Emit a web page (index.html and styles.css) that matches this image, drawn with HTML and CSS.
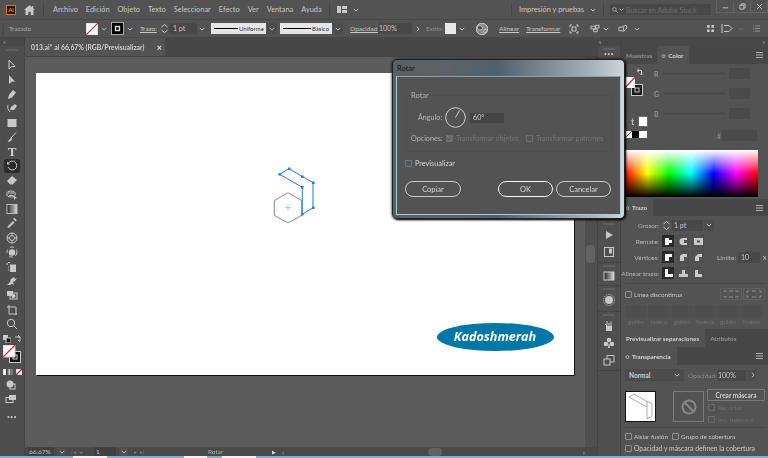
FILE: index.html
```html
<!DOCTYPE html>
<html lang="es">
<head>
<meta charset="utf-8">
<title>Adobe Illustrator</title>
<link rel="stylesheet" href="styles.css">
</head>
<body>
<div class="app">
  <header class="menubar">
    <span class="ai-logo">Ai</span>
    <svg class="home" viewBox="0 0 12 11"><path d="M6 0 0 5.500h1.600V11h3V7.500h2.800V11h3V5.500H12L10 3.700V1H8.600v1.400z"/></svg>
    <i class="vr vr-home"></i>
    <nav class="menus"><span>Archivo</span><span>Edición</span><span>Objeto</span><span>Texto</span><span>Seleccionar</span><span>Efecto</span><span>Ver</span><span>Ventana</span><span>Ayuda</span></nav>
    <i class="vr vr-menu"></i>
    <svg class="layout" viewBox="0 0 10 7"><path d="M0 0h4v7H0zM5 0h5v3H5zM5 4h5v3H5z"/></svg>
    <svg class="chev chev-layout" viewBox="0 0 8 5"><path d="M1 1l3 3 3-3"/></svg>
    <div class="grow"></div>
    <i class="vr"></i>
    <span class="workspace-name">Impresión y pruebas</span>
    <svg class="chev chev-ws" viewBox="0 0 8 5"><path d="M1 1l3 3 3-3"/></svg>
    <i class="vr vr-ws"></i>
    <div class="stock">
      <svg class="glass" viewBox="0 0 9 9"><circle cx="3.600" cy="3.600" r="2.700"/><path d="M5.600 5.600 8.500 8.500"/></svg>
      <svg class="chev chev-stock" viewBox="0 0 8 5"><path d="M1 1l3 3 3-3"/></svg>
      <span>Buscar en Adobe Stock</span>
    </div>
    <div class="winbtns">
      <span class="winbtn"><svg viewBox="0 0 8 8"><path d="M1 5.500h6"/></svg></span>
      <span class="winbtn"><svg viewBox="0 0 8 8"><path d="M2.500 2.500V1h4.500v4.500H5.500M1 2.500h4.500V7H1z"/></svg></span>
      <span class="winbtn"><svg viewBox="0 0 8 8"><path d="m1.200 1.200 5.600 5.600m0-5.600L1.200 6.800"/></svg></span>
    </div>
  </header>

  <div class="controlbar">
    <i class="grip"></i>
    <span class="cb-title">Trazado</span>
    <svg class="fill-none" viewBox="0 0 12 12"><rect width="12" height="12" fill="#fff"/><path d="M0 12 12 0" stroke="#e3202a" stroke-width="1.200"/></svg>
    <svg class="chev cb-c1" viewBox="0 0 8 5"><path d="M1 1l3 3 3-3"/></svg>
    <svg class="stroke-box" viewBox="0 0 13 13"><rect x=".5" y=".5" width="12" height="12" fill="#000" stroke="#aaa"/><rect x="4.500" y="4.500" width="4" height="4" fill="none" stroke="#ddd" stroke-width="1.400"/></svg>
    <svg class="chev cb-c2" viewBox="0 0 8 5"><path d="M1 1l3 3 3-3"/></svg>
    <span class="cb-link cb-trazo">Trazo:</span>
    <svg class="spin cb-spin" viewBox="0 0 9 11"><path d="M1.500 4 4.500 1.500 7.500 4M1.500 7l3 2.500L7.500 7"/></svg>
    <span class="cb-val">1 pt</span>
    <svg class="chev cb-c3" viewBox="0 0 8 5"><path d="M1 1l3 3 3-3"/></svg>
    <span class="cb-line cb-uni"><i class="bar"></i><b>Uniforme</b></span>
    <span class="chevbox"><svg class="chev" viewBox="0 0 8 5"><path d="M1 1l3 3 3-3"/></svg></span>
    <span class="cb-line cb-bas"><i class="bar"></i><b>Básico</b></span>
    <span class="chevbox"><svg class="chev" viewBox="0 0 8 5"><path d="M1 1l3 3 3-3"/></svg></span>
    <span class="cb-link cb-op">Opacidad:</span>
    <span class="cb-pct">100%</span>
    <svg class="chev-r cb-arrow" viewBox="0 0 5 8"><path d="m1 1 3 3-3 3"/></svg>
    <span class="cb-muted">Estilo:</span>
    <i class="style-swatch"></i>
    <svg class="chev cb-c6" viewBox="0 0 8 5"><path d="M1 1l3 3 3-3"/></svg>
    <svg class="globe" viewBox="0 0 12 12"><circle cx="6" cy="6" r="5.800" fill="#8b8b8b"/><path d="M2 3c2-1 3 0 4 1s0 3-2 3-3-1-2-4zM8 7l2-1 0 3-2 1z" fill="#444"/></svg>
    <span class="cb-link cb-al">Alinear</span>
    <span class="cb-link cb-tr">Transformar</span>
    <svg class="ci ci-1" viewBox="0 0 10 10"><path d="M3 1H1v2M7 1h2v2M3 9H1V7M7 9h2V7M3 3h4v4H3z"/></svg>
    <svg class="ci ci-2" viewBox="0 0 11 10"><path d="M1 2h5v3H1zM6 1h4v3H6zM4 5h4v3H4z"/></svg>
    <svg class="chev cb-c7" viewBox="0 0 8 5"><path d="M1 1l3 3 3-3"/></svg>
    <svg class="ci ci-3" viewBox="0 0 11 10"><path d="M1 3h5v4H1zM5 2l4-1 1 3-4 4"/></svg>
    <svg class="chev cb-c8" viewBox="0 0 8 5"><path d="M1 1l3 3 3-3"/></svg>
    <div class="grow"></div>
    <svg class="ci ci-grid" viewBox="0 0 8 8"><path class="solid" d="M0 0h3v3H0zM5 0h3v3H5zM0 5h3v3H0zM5 5h3v3H5z"/></svg>
    <svg class="ci ci-dist" viewBox="0 0 12 9"><path d="M1 0v9M3 1.500h5l3 3-3 3H3"/></svg>
    <svg class="chev cb-c9" viewBox="0 0 8 5"><path d="M1 1l3 3 3-3"/></svg>
    <svg class="ci ci-list" viewBox="0 0 8 8"><path d="M0 1h1M2 1h6M0 4h1M2 4h6M0 7h1M2 7h6"/></svg>
  </div>

  <div class="workspace">
    <aside class="toolbar">
      <div class="collapse-row"><span>»</span></div>
      <div class="tools">
        <i class="toolgrip"></i>
        <span class="tool"><svg viewBox="0 0 12 12"><path d="M3 1v9l2.500-2.300L9 7.500z"/></svg></span>
        <span class="tool"><svg viewBox="0 0 12 12"><path class="solid" d="M3 1v9l2.500-2.300L9 7.500z"/></svg></span>
        <span class="tool"><svg viewBox="0 0 12 12"><path class="solid" d="M2 11l1-4 4-5 3 2.500-4 5z"/></svg></span>
        <span class="tool"><svg viewBox="0 0 12 12"><path d="M2 3c-1 2 0 5 2 7"/><path class="solid" d="M4 8l1-3 4-3 2 2-3 4z"/></svg></span>
        <span class="tool"><svg viewBox="0 0 12 12"><rect class="solid" x="1.500" y="2" width="9" height="8"/></svg></span>
        <span class="tool"><svg viewBox="0 0 12 12"><path d="M10 1.500 5 7"/><path class="solid" d="M5 6.500 6.500 8 4 10.500l-2.500.5z"/></svg></span>
        <span class="tool tool-t">T</span>
        <span class="tool tool-on"><svg viewBox="0 0 12 12"><path d="M2.300 3.300A4.500 4.500 0 1 1 2 7"/><path class="solid" d="M1 1.500v3h3z"/></svg></span>
        <span class="tool"><svg viewBox="0 0 12 12"><path class="solid" d="M1 7l5-5 5 4-4.500 4.500H4z"/></svg></span>
        <span class="tool"><svg viewBox="0 0 12 12"><ellipse cx="5" cy="5" rx="4.200" ry="3"/><path d="M2 4h6M3 6.500h4"/><path class="solid" d="M7 6l4 3-2 .5-.5 2z"/></svg></span>
        <span class="tool"><svg viewBox="0 0 12 12"><defs><linearGradient id="gr"><stop offset="0" stop-color="#222"/><stop offset="1" stop-color="#ddd"/></linearGradient></defs><rect x="1" y="1.500" width="10" height="9" fill="url(#gr)" stroke="#bbb"/></svg></span>
        <span class="tool"><svg viewBox="0 0 12 12"><path class="solid" d="M7 4 8.500 5.500 3.500 10.500 1.500 11l.5-2zM7 1.800 8.300.8l2.500 2.500-1.200 1.300z"/></svg></span>
        <span class="tool"><svg viewBox="0 0 12 12"><circle cx="6" cy="6" r="5"/><circle cx="6" cy="6" r="2.500"/><path d="M6 1v2.500M6 8.500V11M1 6h2.500M8.500 6H11"/></svg></span>
        <span class="tool"><svg viewBox="0 0 12 12"><circle class="solid" cx="6" cy="6.500" r="3.200"/><circle cx="6" cy="6" r="5" stroke-dasharray="4 3"/></svg></span>
        <span class="tool"><svg viewBox="0 0 12 12"><path d="M2 1.500h2M1 4V2"/><rect class="solid" x="4" y="3.500" width="6" height="7.500"/><path d="M2 6h1M2 9h1"/></svg></span>
        <span class="tool"><svg viewBox="0 0 12 12"><path class="solid" d="M1 10l3-3 1-3 3-2 1 2 2-1-2 3-2 1 1 3-2-1-2 1z"/></svg></span>
        <span class="tool"><svg viewBox="0 0 12 12"><rect class="solid" x="1" y="2" width="6" height="5"/><rect x="4" y="4" width="7" height="6"/><circle class="solid" cx="7.500" cy="7" r="2"/></svg></span>
        <span class="tool"><svg viewBox="0 0 12 12"><path d="M1 3h9v8M3 1v9h8"/></svg></span>
        <span class="tool"><svg viewBox="0 0 12 12"><circle cx="5" cy="5" r="3.700"/><path d="m8 8 3 3"/></svg></span>
      </div>
      <div class="colors">
        <div class="swaprow">
          <svg class="mini" viewBox="0 0 8 8"><rect class="solid" width="5" height="5"/><rect x="3" y="3" width="5" height="5" fill="#111" stroke="#ccc"/></svg>
          <svg class="mini" viewBox="0 0 8 8"><path d="M1 2h5v4M4 0l2 2-2 0M6 7 4 5"/></svg>
        </div>
        <div class="fillstack">
          <svg viewBox="0 0 18 18"><rect x="6.500" y="6.500" width="11" height="11" fill="#111" stroke="#ccc"/><rect x="10" y="10" width="4" height="4" fill="none" stroke="#ccc"/><rect width="12" height="12" fill="#fff"/><path d="M0 12 12 0" stroke="#e3202a" stroke-width="1.200"/></svg>
        </div>
        <div class="moderow">
          <span class="grad3"><i></i><i></i><i></i></span>
          <svg class="none6" viewBox="0 0 6 6"><rect width="6" height="6" fill="#fff"/><path d="M0 6 6 0" stroke="#e3202a" stroke-width="1.300"/></svg>
        </div>
        <span class="tool tool-low"><svg viewBox="0 0 12 12"><circle class="solid" cx="5" cy="5" r="3.500"/><rect x="5" y="5" width="5" height="5"/></svg></span>
        <span class="tool tool-low2"><svg viewBox="0 0 12 12"><rect x="1" y="4.500" width="7" height="5"/><rect class="solid" x="4" y="2" width="7" height="5"/></svg></span>
        <span class="dots">•••</span>
      </div>
    </aside>

    <main class="document">
      <div class="tabbar">
        <div class="tab"><span>013.ai* al 66,67% (RGB/Previsualizar)</span><b>×</b></div>
      </div>
      <div class="canvasrow">
        <div class="canvas">
          <div class="artboard">
            <svg class="art" viewBox="36 73 538 302">
              <path class="hex" d="M288 192.700 301.700 200.700V215.300L288 223 274.300 215.300V200.700z"/>
              <path class="cross" d="M288 204.500v6.500M284.800 207.700h6.500"/>
              <path class="sel" d="M279.700 174.300 289 168.700 313 182.700V207.700L302.300 214.300V187.300L279.700 174.300"/>
              <g class="nodes">
                <rect x="278.500" y="173" width="2.500" height="2.500"/><rect x="288" y="167.500" width="2.500" height="2.500"/>
                <rect x="301" y="175.500" width="2.500" height="2.500"/><rect x="312" y="181.500" width="2.500" height="2.500"/>
                <rect x="312" y="206.500" width="2.500" height="2.500"/><rect x="301" y="213" width="2.500" height="2.500"/>
                <rect x="301" y="186" width="2.500" height="2.500"/>
              </g>
              <ellipse class="brand" cx="495.500" cy="337" rx="58.500" ry="14"/>
              <text class="brand-text" x="495" y="341">Kadoshmerah</text>
            </svg>
          </div>
        </div>
        <div class="vscroll"><i></i></div>
      </div>
      <div class="statusbar">
        <span class="st-zoom">66.67%</span>
        <span class="st-chev"><svg class="chev" viewBox="0 0 8 5"><path d="M1 1l3 3 3-3"/></svg></span>
        <span class="st-nav st-prev">|◂ &nbsp;◂</span>
        <span class="st-page">1</span>
        <span class="st-chev"><svg class="chev" viewBox="0 0 8 5"><path d="M1 1l3 3 3-3"/></svg></span>
        <span class="st-nav st-next">▸ &nbsp;▸|</span>
        <span class="st-tool">Rotar</span>
        <span class="st-play">▶</span>
        <div class="hscroll"><span>‹</span><i></i><span>›</span></div>
      </div>
    </main>

    <aside class="dock">
      <div class="collapse-row collapse-left"><span>«</span></div>
      <div class="dock-group dock-top"><i class="toolgrip"></i><span class="dots">•••</span></div>
      <div class="dock-spacer"></div>
      <div class="dock-group"><i class="toolgrip"></i>
        <span class="tool"><svg viewBox="0 0 12 12"><path class="solid" d="M3 2l7 4-7 4z"/></svg></span>
        <span class="tool"><svg viewBox="0 0 12 12"><rect x="1.500" y="1.500" width="9" height="9"/><path class="solid" d="M6 2.500h3v5H6z"/></svg></span>
      </div>
      <div class="dock-group dock-grad"><i class="toolgrip"></i>
        <span class="tool"><svg viewBox="0 0 12 12"><rect x="1" y="2" width="10" height="8" fill="url(#gr)" stroke="#ccc"/></svg></span>
      </div>
      <div class="dock-group dock-sun"><i class="toolgrip"></i>
        <span class="tool"><svg viewBox="0 0 12 12"><circle class="solid" cx="6" cy="6" r="4"/><circle cx="6" cy="6" r="5.500" stroke-dasharray="1 1"/></svg></span>
      </div>
      <div class="dock-group"><i class="toolgrip"></i>
        <span class="tool"><svg viewBox="0 0 12 12"><path class="solid" d="M3 6h6v5H3z"/><path d="M4 6V1M6 6V3M8 6V1.500M2 4l2 2"/></svg></span>
        <span class="tool"><svg viewBox="0 0 12 12"><circle class="solid" cx="6" cy="3" r="2.300"/><circle class="solid" cx="3" cy="7" r="2.300"/><circle class="solid" cx="9" cy="7" r="2.300"/><path class="solid" d="M5.500 7h1l.5 4H5z"/></svg></span>
        <span class="tool"><svg viewBox="0 0 12 12"><rect x="1" y="5" width="6" height="6"/><path d="M4 5V1.500h7V8H7"/></svg></span>
      </div>
    </aside>

    <section class="panels">
      <div class="collapse-row collapse-right"><span>»</span></div>
      <div class="ptabs">
        <span class="ptab">Muestras</span>
        <span class="ptab ptab-on"><em>≎</em> Color</span>
        <svg class="pmenu" viewBox="0 0 7 6"><path d="M0 .5h7M0 3h7M0 5.500h7"/></svg>
      </div>
      <div class="color">
        <div class="color-main">
          <div class="color-left">
            <div class="swap-mini"><svg viewBox="0 0 22 28"><path d="M12 2.500h4.500V7M14 .8l-2 1.700 2 1.700M15 5.500l1.500 1.500 1.500-1.500"/><rect x="6.500" y="16.500" width="11" height="11" fill="#1a1a1a" stroke="#c4c4c4"/><rect x="10" y="20" width="4" height="4" stroke="#c4c4c4"/><rect y="9" width="10" height="11" fill="#fff" stroke="none"/><path d="M0 20 10 9" stroke="#e3202a" stroke-width="1.200"/></svg></div>
            <div class="t-row"><b>t</b><i class="white-sq"></i></div>
            <div class="mini-row"><svg class="m-none" viewBox="0 0 7 7"><rect width="7" height="7" fill="#fff" stroke="none"/><path d="M0 7 7 0" stroke="#e3202a"/></svg><i class="m-black"></i><i class="m-white"></i></div>
          </div>
          <div class="sliders">
            <div class="sl"><label>R</label><i class="track"></i><i class="sl-box"></i></div>
            <div class="sl"><label>G</label><i class="track"></i><i class="sl-box"></i></div>
            <div class="sl"><label>B</label><i class="track"></i><i class="sl-box"></i></div>
            <div class="hex-row"><label>#</label><i class="hex-box"></i></div>
          </div>
        </div>
        <div class="spectrum"></div>
      </div>

      <div class="ptabs ptabs-stroke">
        <span class="ptab ptab-on"><em>≎</em> Trazo</span>
        <svg class="pmenu" viewBox="0 0 7 6"><path d="M0 .5h7M0 3h7M0 5.500h7"/></svg>
      </div>
      <div class="stroke">
        <div class="srow">
          <label>Grosor:</label>
          <svg class="spin" viewBox="0 0 9 11"><path d="M1.500 4 4.500 1.500 7.500 4M1.500 7l3 2.500L7.500 7"/></svg>
          <span class="s-val">1 pt</span>
          <span class="chevbox s-chev"><svg class="chev" viewBox="0 0 8 5"><path d="M1 1l3 3 3-3"/></svg></span>
        </div>
        <div class="srow">
          <label>Remate:</label>
          <span class="sbtn sbtn-on"><svg viewBox="0 0 9 9"><path class="wh" d="M1 1h4v2h3v3H5v2H1z"/></svg></span>
          <span class="sbtn"><svg viewBox="0 0 9 9"><path class="lt" d="M8 1H4a3.500 3.500 0 0 0 0 7h4V6H5V3h3z"/></svg></span>
          <span class="sbtn"><svg viewBox="0 0 9 9"><path class="lt" d="M0 1h9v7H0zM3 3.500v2h3v-2z" fill-rule="evenodd"/></svg></span>
        </div>
        <div class="srow">
          <label>Vértices:</label>
          <span class="sbtn sbtn-on"><svg viewBox="0 0 9 9"><path class="wh" d="M1 1h7v3H5v4H1z"/></svg></span>
          <span class="sbtn"><svg viewBox="0 0 9 9"><path class="lt" d="M3 1h5v3H5v4H1V3z"/></svg></span>
          <span class="sbtn"><svg viewBox="0 0 9 9"><path class="lt" d="M4 1h4v3H5v4H1V4z"/></svg></span>
          <label class="lim">Límite:</label>
          <span class="lim-box">10</span>
          <span class="lim-x">x</span>
        </div>
        <div class="srow">
          <label>Alinear trazo:</label>
          <span class="sbtn sbtn-on"><svg viewBox="0 0 9 9"><path class="wh" d="M1 0h3v5h5v3H1z"/></svg></span>
          <span class="sbtn"><svg viewBox="0 0 9 9"><path class="lt" d="M3 1h3v4h3v3H0V5h3z"/></svg></span>
          <span class="sbtn"><svg viewBox="0 0 9 9"><path class="lt" d="M1 1h3v4h4v3H1z"/></svg></span>
        </div>
        <hr class="sep sep-stroke">
        <div class="dash-row">
          <i class="cb"></i><span class="lbl">Línea discontinua</span>
          <div class="dash-btns">
            <span><svg viewBox="0 0 16 8"><path d="M1 2V1h3M6 1h4M12 1h3v1M1 6v1h3M6 7h4M12 7h3V6"/></svg></span>
            <span><svg viewBox="0 0 16 8"><path d="M1 3V1h2M13 1h2v2M1 5v2h2M13 7h2V5M6 1h4M6 7h4"/></svg></span>
          </div>
        </div>
        <div class="dash-grid">
          <span><i></i>guión</span><span><i></i>hueco</span><span><i></i>guión</span><span><i></i>hueco</span><span><i></i>guión</span><span><i></i>hueco</span>
        </div>
      </div>

      <div class="ptabs ptabs-sep">
        <span class="ptab ptab-wide">Previsualizar separaciones</span>
        <span class="ptab">Atributos</span>
      </div>
      <div class="ptabs ptabs-trans">
        <span class="ptab ptab-on"><em>≎</em> Transparencia</span>
        <svg class="pmenu" viewBox="0 0 7 6"><path d="M0 .5h7M0 3h7M0 5.500h7"/></svg>
      </div>
      <div class="trans">
        <div class="trow">
          <span class="blend">Normal<svg class="chev" viewBox="0 0 8 5"><path d="M1 1l3 3 3-3"/></svg></span>
          <span class="t-op">Opacidad:</span>
          <span class="t-pct">100%</span>
          <span class="t-more"><svg class="chev-r" viewBox="0 0 5 8"><path d="m1 1 3 3-3 3"/></svg></span>
        </div>
        <div class="tmask">
          <div class="thumb"><svg viewBox="0 0 28 28"><path d="M3 5 8 2l13 7.500 5 2V24l-5 3V9.500M3 5l18 10" fill="none" stroke="#999" stroke-width=".8"/></svg></div>
          <div class="nomask"><svg viewBox="0 0 16 16"><circle cx="8" cy="8" r="6.500"/><path d="M3.500 3.500l9 9"/></svg></div>
          <div class="mask-opts">
            <button class="maskbtn">Crear máscara</button>
            <div class="opt"><i class="cb cb-dim"></i>Recortar</div>
            <div class="opt"><i class="cb cb-dim"></i>Inv. máscara</div>
          </div>
        </div>
        <hr class="sep">
        <div class="checks"><i class="cb"></i><span class="lbl lbl-a">Aislar fusión</span><i class="cb"></i><span class="lbl">Grupo de cobertura</span></div>
        <div class="checks"><i class="cb"></i><span class="lbl lbl-long">Opacidad y máscara definen la cobertura</span></div>
      </div>
    </section>
  </div>
  <footer class="taskbar"><i></i><i></i><i></i></footer>

  <div class="dialog">
    <div class="dlg-title">Rotar</div>
    <div class="dlg-body">
      <fieldset class="dlg-set">
        <legend>Rotar</legend>
        <div class="dlg-angle">
          <label>Ángulo:</label>
          <svg class="dial" viewBox="0 0 21 21"><circle cx="10.500" cy="10.500" r="9.800"/><path d="M10.500 10.500 14.500 3.500"/></svg>
          <span class="dlg-input">60°</span>
        </div>
        <div class="dlg-opts">
          <label>Opciones:</label>
          <i class="dlg-cb dlg-cb-on"><svg viewBox="0 0 7 7"><path d="m1 3.500 2 2 3-4"/></svg></i><span>Transformar objetos</span>
          <i class="dlg-cb dlg-cb-2"></i><span>Transformar patrones</span>
        </div>
      </fieldset>
      <div class="dlg-prev"><i class="dlg-cb-blue"></i><span>Previsualizar</span></div>
      <div class="dlg-btns">
        <button class="dbtn dbtn-copy">Copiar</button>
        <button class="dbtn dbtn-ok">OK</button>
        <button class="dbtn">Cancelar</button>
      </div>
    </div>
  </div>
</div>
</body>
</html>
```

FILE: styles.css
```css
* { box-sizing: border-box; }
html, body { margin: 0; padding: 0; }
body { width: 768px; height: 458px; overflow: hidden; background: #535353; font-family: "Lato", "Open Sans", sans-serif; font-size: 7px; color: #c4c4c4; }
span, label { white-space: nowrap; }
i, em { font-style: normal; display: block; }
svg { display: block; fill: none; stroke: #c8c8c8; stroke-width: 1; }
svg .solid { fill: #c8c8c8; stroke: none; }
.app { position: relative; width: 768px; height: 458px; display: flex; flex-direction: column; filter: blur(.3px); }
.grow { flex: 1; }
.chev { width: 6px; height: 4px; flex: none; stroke-width: 1.200; }
.chev-r { width: 4px; height: 6px; flex: none; stroke-width: 1.200; }
.vr { display: block; width: 1px; height: 13px; background: #444; flex: none; }

/* menu bar */
.menubar { height: 19px; display: flex; align-items: center; background: #535353; padding-left: 6px; flex: none; }
.ai-logo { width: 10px; height: 10px; background: #2e1600; border: 1px solid #d9791f; color: #e88a2a; font-size: 6px; font-weight: 700; line-height: 8px; text-align: center; flex: none; }
.home { width: 11px; height: 10px; margin-left: 8px; flex: none; }
.home path { fill: #c8c8c8; stroke: none; }
.vr-home { margin-left: 8px; }
.menus { display: flex; gap: 8px; margin-left: 9px; font-size: 7.400px; color: #c6c6c6; }
.vr-menu { margin-left: 7px; }
.layout { width: 10px; height: 7px; margin-left: 7px; }
.layout path { fill: #c8c8c8; stroke: none; }
.chev-layout { margin-left: 6px; }
.workspace-name { margin-left: 7px; font-size: 7.400px; color: #c6c6c6; }
.chev-ws { margin-left: 6px; }
.vr-ws { margin-left: 7px; }
.stock { width: 101px; height: 11px; margin-left: 6px; background: #484848; display: flex; align-items: center; padding-left: 2px; color: #6e6e6e; font-size: 7px; border-radius: 1px; flex: none; }
.stock span { margin-left: 2px; }
.glass { width: 6px; height: 6px; }
.chev-stock { width: 5px; height: 3px; margin-left: 1px; }
.winbtns { display: flex; margin-left: 5px; height: 12px; align-self: flex-start; margin-top: 1px; border: 1px solid #626262; border-right: 0; border-top: 0; flex: none; }
.winbtn { width: 17px; display: flex; align-items: center; justify-content: center; border-right: 1px solid #626262; }
.winbtn svg { width: 7px; height: 7px; }

/* control bar */
.controlbar { height: 19px; flex: none; display: flex; align-items: center; background: #535353; border-top: 1px solid #484848; border-bottom: 1px solid #484848; padding-left: 2px; }
.grip { width: 2px; height: 12px; background: #4a4a4a; flex: none; }
.cb-title { margin-left: 5px; width: 77px; flex: none; font-size: 6.500px; color: #a8a8a8; }
.fill-none { width: 12px; height: 12px; flex: none; }
.cb-c1 { margin-left: 3px; }
.stroke-box { width: 13px; height: 13px; margin-left: 4px; flex: none; }
.cb-c2 { margin-left: 3px; }
.cb-link { text-decoration: underline; font-size: 6.500px; color: #c8c8c8; flex: none; }
.cb-trazo { margin-left: 7px; width: 16px; }
.spin { width: 9px; height: 11px; flex: none; }
.cb-spin { margin-left: 4px; }
.cb-val { width: 28px; height: 11px; background: #484848; padding-left: 4px; line-height: 11px; flex: none; }
.cb-c3 { margin-left: 2px; margin-right: 3px; }
.cb-line { height: 11px; background: #e6e6e6; display: flex; align-items: center; padding-left: 3px; flex: none; color: #333; font-size: 6px; margin-left: 3px; }
.cb-line b { font-weight: 400; margin-left: 1px; }
.cb-uni { width: 55px; }
.cb-bas { width: 52px; margin-left: 3px; }
.cb-uni .bar { width: 24px; height: 1.500px; background: #000; }
.cb-bas .bar { width: 28px; height: 1.500px; background: #000; }
.chevbox { width: 10px; height: 11px; background: #4c4c4c; display: flex; align-items: center; justify-content: center; margin-left: 1px; flex: none; }
.cb-op { margin-left: 7px; width: 28px; }
.cb-pct { width: 34px; height: 11px; background: #484848; line-height: 11px; padding-left: 1px; flex: none; }
.cb-arrow { margin-left: 4px; }
.cb-muted { margin-left: 6px; width: 19px; font-size: 6.500px; color: #8d8d8d; flex: none; }
.style-swatch { width: 11px; height: 11px; background: #e9e9e9; flex: none; }
.cb-c6 { margin-left: 3px; }
.globe { width: 12px; height: 12px; margin-left: 11px; flex: none; }
.cb-al { margin-left: 11px; width: 20px; }
.cb-tr { margin-left: 7px; width: 34px; }
.ci { width: 10px; height: 10px; flex: none; }
.ci-1 { margin-left: 9px; }
.ci-2 { margin-left: 11px; }
.cb-c7 { margin-left: 3px; }
.ci-3 { margin-left: 9px; }
.cb-c8 { margin-left: 6px; }
.ci-grid { width: 7px; height: 7px; }
.ci-dist { margin-left: 7px; width: 12px; height: 9px; }
.cb-c9 { margin-left: 5px; stroke: #6e6e6e; }
.ci-list { width: 7px; height: 7px; margin-left: 9px; margin-right: 8px; stroke: #999; }

/* workspace */
.workspace { flex: 1; min-height: 0; display: flex; }
.collapse-row { height: 8px; font-size: 6px; line-height: 7px; color: #b0b0b0; padding-left: 3px; background: #484848; flex: none; }
.toolbar { width: 25px; flex: none; display: flex; flex-direction: column; background: #4e4e4e; border-right: 1px solid #434343; }
.tools { display: flex; flex-direction: column; align-items: center; }
.toolgrip { width: 12px; height: 2px; background: #5f5f5f; margin: 2px auto 1px; flex: none; }
.tools .toolgrip { margin: 3px auto 7px; }
.tool { width: 16px; height: 14.400px; display: flex; align-items: center; justify-content: center; flex: none; }
.tool svg { width: 12px; height: 12px; }
.tool-t { font-family: "Liberation Serif", serif; font-size: 13px; font-weight: 700; color: #d0d0d0; line-height: 14px; }
.tool-on { background: #2b2b2b; border-radius: 2px; }
.colors { display: flex; flex-direction: column; padding-left: 3px; padding-top: 1px; }
.swaprow { display: flex; justify-content: space-between; width: 19px; padding-top: 3px; }
.mini { width: 8px; height: 8px; }
.fillstack { width: 18px; height: 18px; margin-top: 2px; }
.fillstack svg { width: 18px; height: 18px; }
.moderow { display: flex; margin-top: 6px; gap: 3px; }
.grad3 { display: flex; width: 10px; height: 6px; }
.grad3 i { flex: 1; background: #eee; }
.grad3 i:nth-child(2) { background: linear-gradient(90deg, #222, #ddd); }
.grad3 i:nth-child(3) { background: #777; }
.none6 { width: 6px; height: 6px; }
.tool-low { margin-top: 2px; }
.dots { text-align: center; font-size: 5px; letter-spacing: .5px; color: #c8c8c8; line-height: 6px; }
.colors .dots { width: 18px; margin-top: 8px; }

/* document */
.document { width: 572px; flex: none; display: flex; flex-direction: column; }
.tabbar { height: 18px; flex: none; background: #474747; }
.tab { width: 140px; height: 18px; background: #535353; display: flex; align-items: center; padding: 0 3px 0 6px; justify-content: space-between; color: #cfcfcf; font-size: 6.800px; font-weight: 700; }
.tab b { font-size: 9px; color: #ddd; }
.canvasrow { flex: 1; min-height: 0; display: flex; border-top: 1px solid #424242; }
.canvas { flex: 1; background: #5c5c5c; padding: 16px 0 0 11px; }
.artboard { width: 538px; height: 302px; background: #fff; box-shadow: 1px 1px 0 #111; }
.art { width: 538px; height: 302px; }
.hex { stroke: #8a8a8a; stroke-width: 1; fill: #fff; }
.cross { stroke: #4fe0e6; stroke-width: .8; }
.sel { stroke: #2f73d8; stroke-width: 1; }
.nodes rect { fill: #1f78ff; stroke: none; }
.brand { fill: #0077a6; stroke: none; }
.brand-text { fill: #fff; stroke: none; font-family: "Open Sans", sans-serif; font-weight: 700; font-style: italic; font-size: 12.600px; text-anchor: middle; }
.vscroll { width: 12px; background: #4f4f4f; flex: none; padding-top: 188px; }
.vscroll i { width: 9px; height: 18px; background: #636363; border-radius: 4px; margin-left: 1px; }
.statusbar { height: 9px; flex: none; display: flex; align-items: center; background: #494949; font-size: 6.500px; color: #c0c0c0; padding-left: 3px; }
.st-zoom { width: 26px; height: 9px; background: #404040; line-height: 9px; padding-left: 1px; flex: none; }
.st-chev { width: 9px; height: 9px; margin-left: 3px; display: flex; align-items: center; justify-content: center; background: #4f4f4f; flex: none; }
.st-nav { color: #747474; flex: none; font-size: 6px; width: 23px; }
.st-prev { margin-left: 5px; }
.st-next { margin-left: 6px; }
.st-page { width: 22px; height: 9px; background: #404040; line-height: 9px; padding-left: 2px; flex: none; }
.st-tool { margin-left: 51px; width: 64px; color: #b0b0b0; flex: none; }
.st-play { width: 9px; font-size: 5px; color: #ddd; flex: none; }
.hscroll { flex: 1; display: flex; align-items: center; padding: 0 12px 0 1px; color: #aaa; font-size: 8px; line-height: 8px; }
.hscroll i { width: 14px; height: 8px; background: #636363; border-radius: 4px; margin: 0 auto 0 144px; }

/* dock */
.dock { width: 23px; flex: none; background: #4f4f4f; display: flex; flex-direction: column; align-items: stretch; border-left: 1px solid #444; }
.collapse-left { padding-left: 1px; }
.dock-group { display: flex; flex-direction: column; align-items: center; border-bottom: 1px solid #444; flex: none; padding-bottom: 2px; }
.dock-group .tool { height: 17px; }
.dock-group.dock-grad .tool { height: 15px; }
.dock-group.dock-sun .tool { height: 18px; }
.dock-top { height: 19px; }
.dock-spacer { height: 156px; flex: none; }

/* panels */
.panels { width: 148px; flex: none; background: #535353; display: flex; flex-direction: column; border-left: 1px solid #444; }
.collapse-right { text-align: right; padding-right: 3px; }
.ptabs { height: 18px; flex: none; display: flex; align-items: stretch; background: #474747; }
.ptab { display: flex; align-items: center; padding: 0 5px; font-size: 6.300px; color: #8f8f8f; font-weight: 700; }
.ptab em { font-size: 6px; margin-right: 2px; font-weight: 400; }
.ptab-on { background: #535353; color: #d4d4d4; padding: 0 6px 0 4px; }
.pmenu { width: 7px; height: 6px; margin: auto 5px auto auto; stroke: #b0b0b0; }

.color { height: 135px; flex: none; padding: 4px 10px 0 4px; display: flex; flex-direction: column; }
.color-main { display: flex; height: 78px; flex: none; }
.color-left { width: 27px; display: flex; flex-direction: column; flex: none; }
.swap-mini { height: 49px; }
.swap-mini svg { width: 22px; height: 28px; }
.t-row { display: flex; align-items: center; padding-left: 6px; height: 9px; }
.t-row b { color: #c0c0c0; font-size: 9px; width: 8px; }
.white-sq { width: 8px; height: 9px; background: #fff; outline: 1px solid #6a6a6a; }
.mini-row { display: flex; margin-top: 5px; }
.m-none { width: 7px; height: 7px; }
.m-black { width: 7px; height: 7px; background: #000; }
.m-white { width: 8px; height: 7px; background: #fff; }
.sliders { flex: 1; display: flex; flex-direction: column; }
.sl { display: flex; align-items: center; height: 11px; margin-bottom: 9px; color: #8f8f8f; font-weight: 700; flex: none; }
.sl label { width: 9px; margin-left: 2px; }
.track { width: 62px; height: 3px; background: #4a4a4a; border: 1px solid #4d4d4d; flex: none; }
.sl-box { width: 21px; height: 11px; background: #4a4a4a; border-radius: 1px; margin-left: 4px; flex: none; }
.hex-row { display: flex; align-items: center; margin-left: 65px; margin-top: 2px; color: #8f8f8f; }
.hex-row label { width: 5px; }
.hex-box { width: 35px; height: 11px; background: #4a4a4a; flex: none; }
.spectrum { height: 47px; flex: none; margin-top: 4px; background: linear-gradient(to bottom, #fff 0%, rgba(255,255,255,0) 50%, #000 100%), linear-gradient(to right, #f00 0%, #ff0 16.600%, #0f0 33.300%, #0ff 50%, #00f 66.600%, #f0f 83.300%, #f00 100%); }

.ptabs-stroke { height: 17px; }
.stroke { height: 113px; flex: none; padding-top: 1px; display: flex; flex-direction: column; }
.srow { display: flex; align-items: center; height: 16px; flex: none; gap: 3px; padding-right: 4px; }
.srow > label { width: 38px; text-align: right; color: #b8b8b8; font-size: 6.500px; flex: none; }
.s-val { width: 31px; height: 11px; background: #484848; line-height: 11px; padding-left: 2px; margin-left: -2px; flex: none; }
.s-chev { margin-left: -2px; }
.sbtn { width: 12px; height: 12px; display: flex; align-items: center; justify-content: center; border: 1px solid #4c4c4c; flex: none; }
.sbtn-on { background: #2a2a2a; border-color: #2a2a2a; }
.sbtn svg { width: 9px; height: 9px; stroke: none; }
.sbtn .wh { fill: #fff; }
.sbtn .lt { fill: #c9c9c9; }
.srow > .lim { width: 18px; margin: 0 0 0 10px; }
.lim-box { width: 22px; height: 11px; background: #484848; line-height: 11px; padding-left: 3px; flex: none; }
.lim-x { flex: none; }
.sep { height: 1px; border: 0; background: #484848; margin: 1px 4px 0 4px; flex: none; }
.sep-stroke { margin-top: 2px; }
.dash-row { display: flex; align-items: center; padding: 0 3px 0 4px; height: 16px; margin-top: 2px; flex: none; }
.cb { width: 7px; height: 7px; border: 1px solid #8e8e8e; border-radius: 1px; flex: none; }
.cb-dim { border-color: #6a6a6a; }
.lbl { margin-left: 2px; color: #c8c8c8; font-size: 6.300px; }
.lbl-long { font-size: 6.800px; }
.dash-btns { margin-left: auto; display: flex; gap: 1px; }
.dash-btns span { width: 22px; height: 12px; border: 1px solid #5f5f5f; display: flex; align-items: center; justify-content: center; }
.dash-btns svg { width: 16px; height: 8px; stroke: #888; }
.dash-grid { display: grid; grid-template-columns: repeat(6, 22px); column-gap: 1px; padding-left: 4px; margin-top: 3px; text-align: center; color: #737373; font-size: 6.500px; }
.dash-grid i { height: 12px; background: #4f4f4f; margin-bottom: 1px; }

.ptab-wide { background: #535353; color: #cfcfcf; padding: 0 6px 0 5px; }
.trans { flex: 1; min-height: 0; padding: 4px 3px 0 4px; }
.trow { display: flex; align-items: center; height: 12px; }
.blend { width: 59px; height: 12px; border: 1px solid #4a4a4a; background: #4c4c4c; display: flex; align-items: center; justify-content: space-between; padding: 0 3px; color: #d0d0d0; font-weight: 700; font-size: 6.500px; flex: none; }
.t-op { margin-left: 4px; width: 29px; color: #8f8f8f; font-size: 6.500px; flex: none; }
.t-pct { width: 29px; height: 11px; background: #484848; line-height: 11px; padding-left: 1px; flex: none; }
.t-more { width: 9px; height: 11px; background: #4c4c4c; margin-left: 2px; display: flex; align-items: center; justify-content: center; }
.tmask { display: flex; margin-top: 8px; height: 38px; }
.thumb { width: 31px; height: 31px; background: #fff; border: 1.500px solid #111; margin-top: 2px; flex: none; }
.thumb svg { width: 28px; height: 28px; }
.nomask { width: 31px; height: 31px; border: 1px solid #7a7a7a; margin: 2px 0 0 17px; display: flex; align-items: center; justify-content: center; flex: none; }
.nomask svg { width: 16px; height: 16px; stroke: #878787; stroke-width: 2; }
.mask-opts { margin-left: 3px; flex: 1; }
.maskbtn { width: 58px; height: 12px; border: 1px solid #7a7a7a; background: #535353; border-radius: 1px; color: #d0d0d0; font: 700 6.500px "Lato", sans-serif; padding: 0; display: block; }
.opt { display: flex; align-items: center; gap: 3px; color: #6e6e6e; font-size: 6.500px; height: 12px; padding-left: 1px; }
.trans .sep { margin: 0; }
.checks { display: flex; align-items: center; height: 12px; margin-top: 2px; }
.checks + .checks { margin-top: 0; }
.checks .lbl-a { width: 33px; margin-right: 5px; }

.taskbar { height: 2px; flex: none; background: #7fb0cf; display: flex; }
.taskbar i { height: 2px; background: #f2f2f2; }
.taskbar i:nth-child(1) { width: 34px; margin-left: 73px; }
.taskbar i:nth-child(2) { width: 23px; margin-left: 77px; }
.taskbar i:nth-child(3) { width: 34px; margin-left: 15px; }

/* dialog */
.dialog { position: absolute; left: 392px; top: 59px; width: 233px; height: 160px; border: 1px solid #1d2226; border-radius: 5px; background: linear-gradient(90deg, #5b5f62 0%, #5f6266 25%, #50606c 45%, #717d86 60%, #a5afb6 85%, #cfd6da 100%); box-shadow: 0 0 3px #111, 1px 1px 2px #000; padding: 0 3px 3px 3px; display: flex; flex-direction: column; }
.dlg-title { height: 16px; line-height: 17px; padding-left: 1px; font-size: 7.500px; color: #111; flex: none; }
.dlg-body { flex: 1; background: #535353; border: 1px solid #a9cbe0; border-top-color: #8aa0ae; display: flex; flex-direction: column; padding: 0 8px; }
.dlg-set { width: 208px; height: 57px; margin: 18px 0 0 0; padding: 0; border: 1px solid #4f4f4f; position: relative; flex: none; font-size: 7.200px; color: #b4b4b4; display: block; }
.dlg-set legend { position: absolute; left: 5px; top: -5px; padding: 0; font-size: 7.500px; color: #b0b0b0; background: #535353; }
.dlg-angle { display: flex; align-items: center; margin: 11px 0 0 12px; }
.dlg-angle label { width: 27px; color: #b4b4b4; flex: none; }
.dial { width: 21px; height: 21px; flex: none; stroke: #d0d0d0; }
.dlg-input { width: 34px; height: 10px; background: #454545; margin-left: 4px; line-height: 10px; padding-left: 3px; color: #c8c8c8; flex: none; }
.dlg-opts { display: flex; align-items: center; margin: 6px 0 0 5px; color: #767676; font-size: 7.200px; }
.dlg-opts label { width: 35px; color: #b0b0b0; flex: none; }
.dlg-opts span { flex: none; }
.dlg-cb { width: 7px; height: 7px; border: 1px solid #6e6e6e; flex: none; margin-right: 3px; }
.dlg-cb-on { background: #6e6e6e; }
.dlg-cb-on svg { width: 5px; height: 5px; stroke: #444; }
.dlg-cb-2 { margin-left: 7px; }
.dlg-prev { display: flex; align-items: center; margin-top: 7px; gap: 3px; color: #d4d4d4; font-size: 7.300px; flex: none; }
.dlg-cb-blue { width: 7px; height: 7px; border: 1px solid #3f7fc4; flex: none; }
.dlg-btns { display: flex; margin-top: 13px; gap: 3px; flex: none; }
.dbtn { width: 55px; height: 16px; border: 1px solid #c9c9c9; border-radius: 8px; background: #535353; color: #d8d8d8; font: 7.500px "Lato", sans-serif; padding: 0; }
.dbtn-copy { width: 56px; margin-right: 34px; }
.dbtn-ok { border-color: #f4f4f4; }
```
